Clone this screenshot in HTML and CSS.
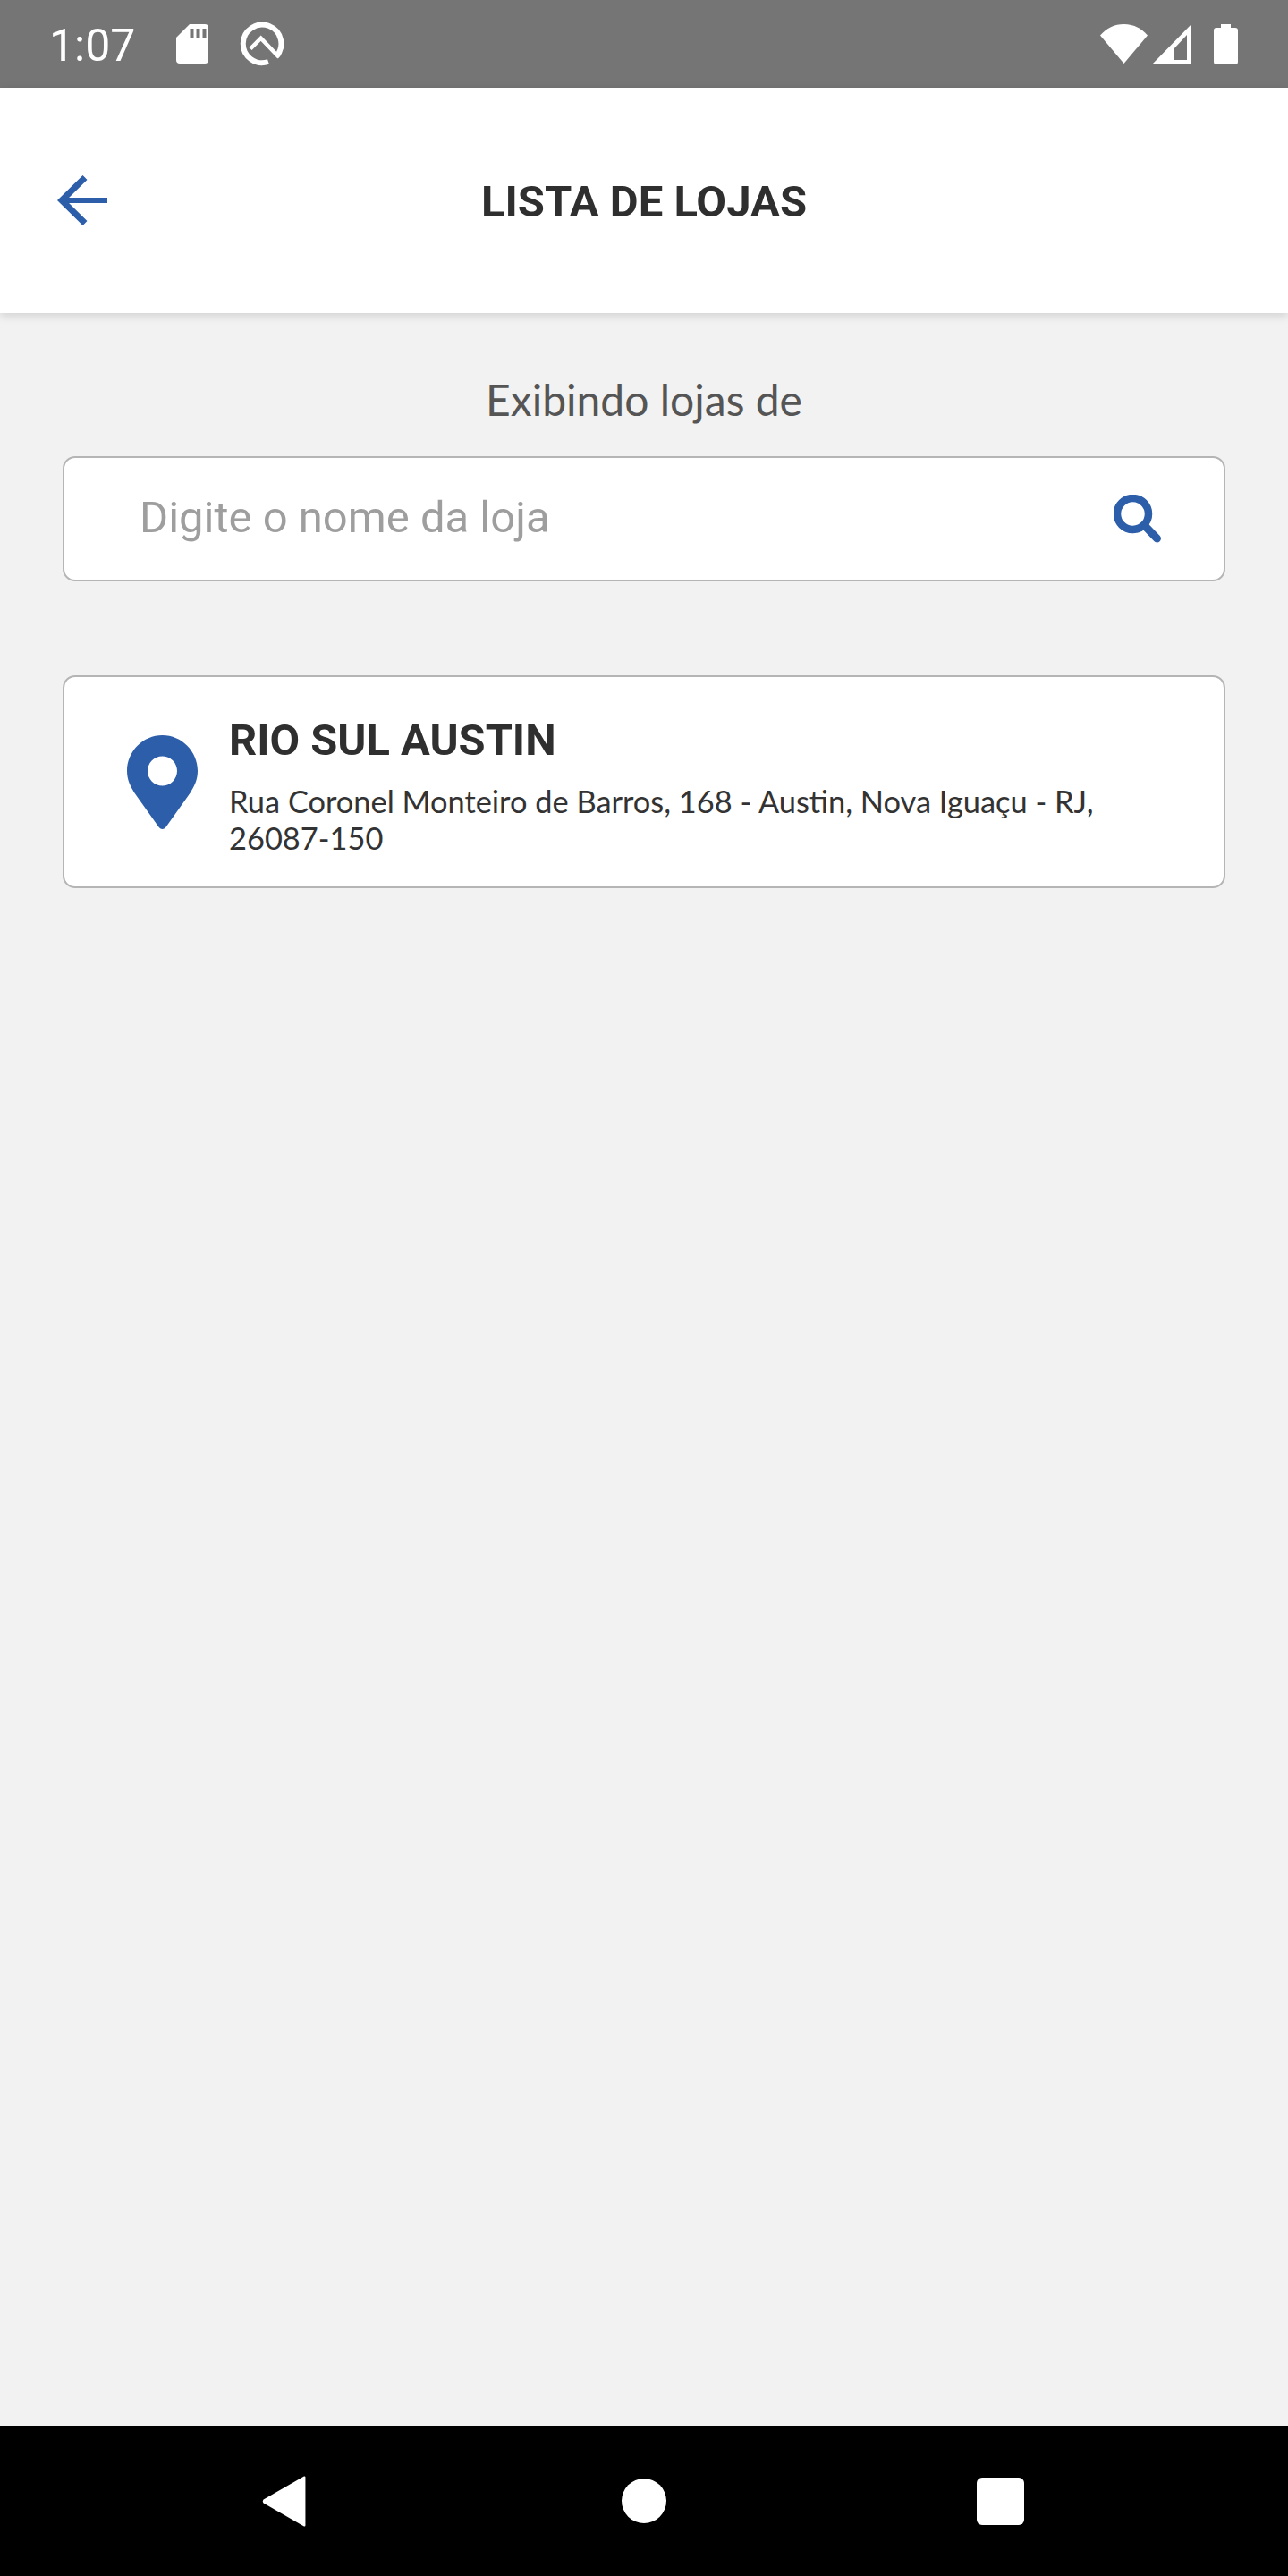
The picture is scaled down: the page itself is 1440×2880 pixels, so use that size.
FILE: index.html
```html
<!DOCTYPE html>
<html lang="pt">
<head>
<meta charset="utf-8">
<title>Lista de lojas</title>
<link rel="stylesheet" href="styles.css">
</head>
<body>
<div class="screen">
  <div class="status">
    <span class="time">1:07</span>
    <svg class="i-sd" viewBox="0 0 36 44"><path fill="#fff" d="M15 0H32a4 4 0 0 1 4 4V40a4 4 0 0 1-4 4H4a4 4 0 0 1-4-4V15Z"/><path fill="#757575" d="M16 5h4v10h-4zM23 5h4v10h-4zM30 5h4v10h-4z" transform="translate(-.5 0)"/></svg>
    <svg class="i-q" viewBox="0 0 49 49"><path fill="none" stroke="#fff" stroke-width="6" d="M41 38A21.300 21.300 0 1 0 32 44"/><path fill="none" stroke="#fff" stroke-width="4.500" d="M12 29.500 23.700 17.700 44 39"/></svg>
    <span class="spacer"></span>
    <svg class="i-wifi" viewBox="0 0 53 44"><path fill="#fff" d="M0 12.500C7 4.500 16 0 26.500 0S46 4.500 53 12.500L26.500 44Z"/></svg>
    <svg class="i-signal" viewBox="0 0 44 45"><path fill="#fff" fill-rule="evenodd" d="M44 0V45H0ZM39 12 24 28V40H39Z"/></svg>
    <svg class="i-battery" viewBox="0 0 27 45"><path fill="#fff" d="M8 0H19V4H24a3 3 0 0 1 3 3V42a3 3 0 0 1-3 3H3a3 3 0 0 1-3-3V7a3 3 0 0 1 3-3H8Z"/></svg>
  </div>
  <header class="topbar">
    <svg class="i-back" viewBox="0 0 56 56"><path fill="none" stroke="#2c5ea9" stroke-width="6" d="M56 28H6"/><path fill="none" stroke="#2c5ea9" stroke-width="7" d="M31 2.500 5 28 31 53.500"/></svg>
    <h1 class="title">LISTA DE LOJAS</h1>
    <span></span>
  </header>
  <main class="content">
    <p class="label">Exibindo lojas de</p>
    <div class="search">
      <span class="placeholder">Digite o nome da loja</span>
      <svg class="i-search" viewBox="0 0 53 54"><circle cx="21.500" cy="21.500" r="17.500" fill="none" stroke="#2c5ea9" stroke-width="8.500"/><path fill="none" stroke="#2c5ea9" stroke-width="9" stroke-linecap="round" d="M36 36 48.500 49"/></svg>
    </div>
    <article class="store">
      <svg class="i-pin" viewBox="0 0 79 105"><path fill="#2c5ea9" fill-rule="evenodd" d="M39.500 0C61 0 79 18 79 40 79 50 75 57 71 64L44 102C41.500 106 37.500 106 35 102L8 64C4 57 0 50 0 40 0 18 18 0 39.500 0ZM39.500 23.500A16.500 16.500 0 1 0 39.500 56.500 16.500 16.500 0 1 0 39.500 23.500Z"/></svg>
      <div class="store-text">
        <h2 class="store-name">RIO SUL AUSTIN</h2>
        <p class="store-address">Rua Coronel Monteiro de Barros, 168 - Austin, Nova Iguaçu - RJ, 26087-150</p>
      </div>
    </article>
  </main>
  <nav class="navbar">
    <svg class="i-nav-back" viewBox="0 0 48 56"><path fill="#fff" d="M47 1.500V54.500Q47 56 45.500 55.500L1 30Q-.5 28 1 26L45.500 .5Q47 0 47 1.500Z"/></svg>
    <span class="nav-home"></span>
    <span class="nav-recent"></span>
  </nav>
</div>
</body>
</html>
```
FILE: styles.css
```css
* { box-sizing: border-box; }
html, body { margin: 0; padding: 0; }
.screen { width: 1440px; height: 2880px; display: flex; flex-direction: column; background: #f2f2f2; overflow: hidden; }
svg { display: block; flex: none; }
.status { height: 98px; background: #757575; display: flex; align-items: center; padding: 0 56px 0 55px; color: #fff; }
.time { font: 400 50px/1 Roboto, sans-serif; width: 142px; padding-top: 4px; }
.i-sd { width: 36px; height: 44px; margin-top: 0; }
.i-q { width: 49px; height: 49px; margin-left: 35px; }
.spacer { flex: 1; }
.i-wifi { width: 53px; height: 44px; }
.i-signal { width: 44px; height: 45px; margin-left: 5px; }
.i-battery { width: 27px; height: 45px; margin-left: 25px; }
.topbar { height: 252px; background: #fff; display: grid; grid-template-columns: 1fr auto 1fr; align-items: center; padding: 0 64px; box-shadow: 0 3px 10px rgba(0,0,0,.14); position: relative; }
.i-back { width: 56px; height: 56px; }
.title { margin: 0; padding-top: 3px; font: 700 49px/1 Roboto, sans-serif; color: #2f2f2f; }
.content { flex: 1; padding: 70px 70px 0 70px; display: flex; flex-direction: column; }
.label { margin: 0; text-align: center; font: 400 48px/53px Lato, sans-serif; color: #555; }
.search { margin-top: 37px; height: 140px; background: #fff; border: 2px solid #b5b5b5; border-radius: 14px; display: flex; align-items: center; justify-content: space-between; padding: 0 70px 0 84px; }
.placeholder { font: 400 49px/1 Roboto, sans-serif; color: #9e9e9e; margin-top: -3px; }
.i-search { width: 53px; height: 54px; }
.store { margin-top: 105px; min-height: 238px; background: #fff; border: 2px solid #b5b5b5; border-radius: 14px; display: flex; align-items: center; padding: 0 70px 0 70px; }
.i-pin { width: 79px; height: 105px; }
.store-text { margin-left: 35px; padding-top: 13px; }
.store-name { margin: 0; font: 700 48.800px/1 Roboto, sans-serif; color: #2f2f2f; }
.store-address { margin: 22px 0 0; font: 400 34.400px/41px Lato, sans-serif; color: #333; }
.navbar { height: 168px; background: #000; position: relative; display: flex; align-items: center; padding-left: 293px; }
.i-nav-back { width: 50px; height: 57px; }
.nav-home { width: 50px; height: 50px; border-radius: 50%; background: #fff; margin-left: 352px; }
.nav-recent { width: 53px; height: 53px; border-radius: 6px; background: #fff; margin-left: 347px; }
```
